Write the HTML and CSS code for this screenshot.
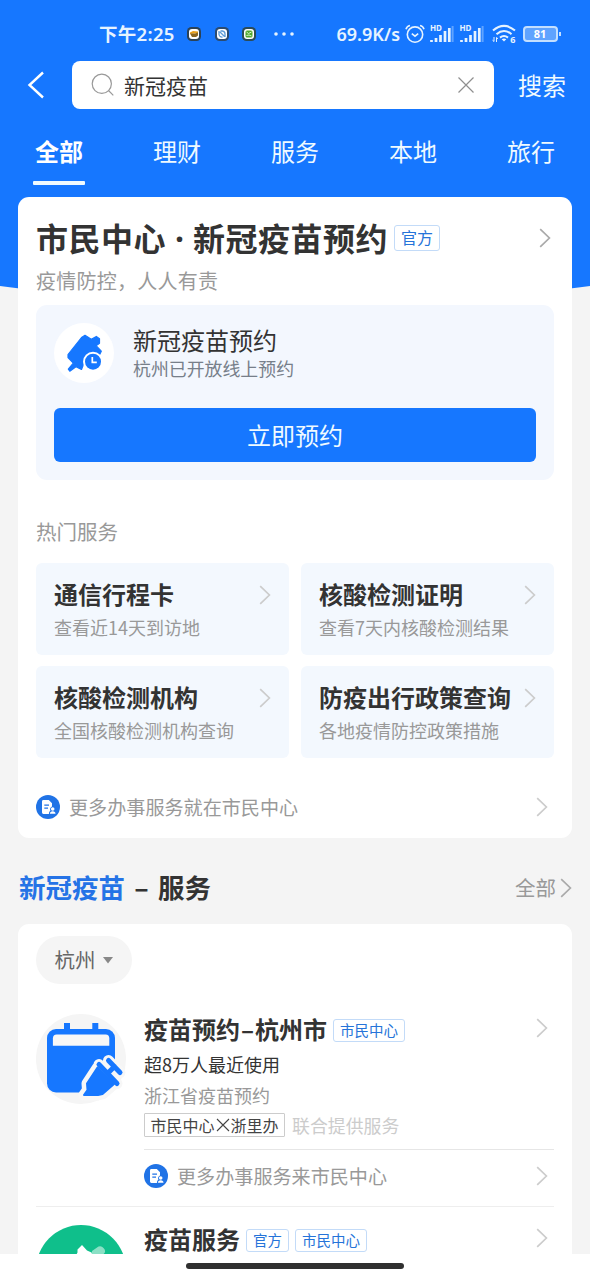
FILE: index.html
```html
<!DOCTYPE html>
<html lang="zh-CN">
<head>
<meta charset="utf-8">
<title>新冠疫苗</title>
<link rel="stylesheet" href="styles.css">
</head>
<body>
<svg class="defs" width="0" height="0" aria-hidden="true">
  <symbol id="chev" viewBox="0 0 12 20"><path d="M1.2 1.2 10.4 10 1.2 18.8" fill="none" stroke="currentColor" stroke-width="1.7"/></symbol>
  <symbol id="doc" viewBox="0 0 24 24">
    <circle cx="12" cy="12" r="12" fill="#2073e6"/>
    <path d="M7.400 5h5.400l3.200 3.200v3.400a3 3 0 0 0-1.600 4.200c-1 .7-1.500 1.600-1.500 3.200H7.400A1.400 1.400 0 0 1 6 17.600V6.400A1.400 1.400 0 0 1 7.400 5z" fill="#fff"/>
    <path d="M8.300 10.200h4.700M8.300 13.200h3.700" stroke="#2073e6" stroke-width="1.200"/>
    <circle cx="16.700" cy="14" r="1.800" fill="#fff"/>
    <path d="M13.900 18.700c0-1.500 1-2.400 2.800-2.400s2.800.9 2.800 2.400z" fill="#fff"/>
  </symbol>
  <symbol id="signal" viewBox="0 0 24 18">
    <path d="M1.500 17v-2M6 17v-4M10.500 17V10M15 17V6M19.300 17V3" stroke="#e6f3ff" stroke-width="2.700"/>
    <path d="M22.600 17V1" stroke="#5fa3ff" stroke-width="2"/>
  </symbol>
  <symbol id="syringe" viewBox="0 0 90 90">
    <path d="M72.500 46.500 84 58.500M78.500 52.500 72 59M63 50.500 81 69.500" stroke-width="5" stroke-linecap="round"/>
    <path d="M61.500 53.500 78 70 66.500 80 62 81H48l3.500-5-.5-6.500z" stroke-width="2" stroke-linejoin="round"/>
  </symbol>
</svg>
<div class="screen">
  <div class="viewport">
    <header class="header">
      <div class="status">
        <span class="clock">下午2:25</span>
        <svg class="app" viewBox="0 0 14 14"><rect width="14" height="14" rx="4.500" fill="#2b4257"/><rect x="2" y="2" width="10" height="10" rx="3" fill="#fff"/><path d="M3 5.500 6 4l5 .5v1.500L3 7z" fill="#e9a11d"/><path d="M3 6.500h5l3-1v3L9 10H5z" fill="#8a651f"/></svg>
        <svg class="app" viewBox="0 0 14 14"><rect width="14" height="14" rx="4.500" fill="#2b4b70"/><rect x="2" y="2" width="10" height="10" rx="3" fill="#fff"/><path d="M4 4v3.500A3 3 0 0 0 7.500 10M5.500 4h2A3 3 0 0 1 10 7v3M5 5l4.500 4.500" fill="none" stroke="#5c9bd8" stroke-width="1.300"/></svg>
        <svg class="app" viewBox="0 0 14 14"><rect width="14" height="14" rx="4.500" fill="#2b4b57"/><rect x="2" y="2" width="10" height="10" rx="3" fill="#fff"/><rect x="3.500" y="3.500" width="7" height="7" rx="1.500" fill="#50a830"/><path d="m4.500 5 2 1.500L9.500 5M4.500 8.500 7 8l2.500 1" fill="none" stroke="#d6f3c8"/></svg>
        <svg class="dots" viewBox="0 0 20 4"><g fill="#e6f3ff"><circle cx="2" cy="2" r="1.800"/><circle cx="10" cy="2" r="1.800"/><circle cx="18" cy="2" r="1.800"/></g></svg>
        <span class="speed">69.9K/s</span>
        <svg class="alarm" viewBox="0 0 20 20"><g fill="none" stroke="#e6f3ff" stroke-width="1.600"><circle cx="10" cy="10.600" r="7.700"/><path d="M6.800 9.600 10 12.200l3.200-2.600M1 5.200Q1.800 2.200 5 1.500M19 5.200Q18.200 2.200 15 1.500"/></g></svg>
        <span class="cell"><b>HD</b><svg viewBox="0 0 24 18"><use href="#signal"/></svg></span>
        <span class="cell"><b>HD</b><svg viewBox="0 0 24 18"><use href="#signal"/></svg></span>
        <span class="wifi"><svg viewBox="0 0 24 20"><g fill="none" stroke="#e6f3ff" stroke-width="2.100"><path d="M1 6.500Q12-2.700 23 6.500M4.500 10.200q7.500-6.400 15 0M8 13.600q4-3.200 8 0"/></g><path d="m9.700 15.200 2.300 2.300 2.300-2.300q-2.300-1.500-4.600 0z" fill="#e6f3ff"/><path d="M2 13v4.500l-1.500-1.300M4.500 18v-4.500L6 14.800" fill="none" stroke="#e6f3ff"/></svg><b>6</b></span>
        <span class="battery"><b>81</b></span>
      </div>
      <div class="searchrow">
        <svg class="back" viewBox="0 0 18 28"><path d="M16 1.500 2.500 14 16 26.500" fill="none" stroke="#fff" stroke-width="2.400"/></svg>
        <div class="searchbox">
          <svg class="mag" viewBox="0 0 24 24"><g fill="none" stroke="#999" stroke-width="1.200"><circle cx="10.800" cy="10.800" r="9.600"/><path d="m17.500 17.500 4.800 4.800"/></g></svg>
          <span class="query">新冠疫苗</span>
          <svg class="clear" viewBox="0 0 16 16"><path d="m.5.5 15 15m0-15-15 15" stroke="#8f8f8f" stroke-width="1.200"/></svg>
        </div>
        <span class="go">搜索</span>
      </div>
      <nav class="tabs">
        <span class="tab active">全部</span><span class="tab">理财</span><span class="tab">服务</span><span class="tab">本地</span><span class="tab">旅行</span>
      </nav>
    </header>

    <section class="card center-card">
      <div class="head"><h1>市民中心<i>·</i>新冠疫苗预约</h1><span class="badge big">官方</span><svg class="chev dark"><use href="#chev"/></svg></div>
      <p class="slogan">疫情防控，人人有责</p>
      <div class="panel">
        <div class="panel-top">
          <svg class="round" viewBox="0 0 60 60"><circle cx="30" cy="30" r="30" fill="#fff"/>
            <path d="M27.500 14.500 31 12.300l6.300 3.900 5-2.800 3.200 2.400v4.500l-3.400 2.400 5.200 5.500-2 4L31 37.500l-3.500 9-5.500-2.700-6.200 4.400-1.500-2 5-6L14 34.500v-3z" fill="#1677ff" stroke="#1677ff" stroke-width="1.200" stroke-linejoin="round"/>
            <circle cx="39" cy="38.700" r="10" fill="#fff"/><circle cx="39" cy="38.700" r="8" fill="#1677ff"/><path d="M38.300 34v5.300h4.500" fill="none" stroke="#fff" stroke-width="1.700"/></svg>
          <div><div class="p-title">新冠疫苗预约</div><div class="p-sub">杭州已开放线上预约</div></div>
        </div>
        <div class="cta">立即预约</div>
      </div>
      <h2 class="hot">热门服务</h2>
      <div class="grid">
        <div class="tile"><div class="t-row"><b>通信行程卡</b><svg class="chev"><use href="#chev"/></svg></div><p>查看近14天到访地</p></div>
        <div class="tile"><div class="t-row"><b>核酸检测证明</b><svg class="chev"><use href="#chev"/></svg></div><p>查看7天内核酸检测结果</p></div>
        <div class="tile"><div class="t-row"><b>核酸检测机构</b><svg class="chev"><use href="#chev"/></svg></div><p>全国核酸检测机构查询</p></div>
        <div class="tile"><div class="t-row"><b>防疫出行政策查询</b><svg class="chev"><use href="#chev"/></svg></div><p>各地疫情防控政策措施</p></div>
      </div>
      <div class="more"><svg class="doc"><use href="#doc"/></svg><span>更多办事服务就在市民中心</span><svg class="chev"><use href="#chev"/></svg></div>
    </section>

    <div class="section"><h2><em>新冠疫苗</em><i>–</i>服务</h2><span class="all">全部</span><svg class="chev dark"><use href="#chev"/></svg></div>

    <section class="card list-card">
      <div class="pill"><span>杭州</span><svg viewBox="0 0 10 7"><path d="M0 0h10L5 6.500z" fill="#888"/></svg></div>
      <article class="item">
        <svg class="logo" viewBox="0 0 90 90"><circle cx="45" cy="45" r="45" fill="#f5f5f5"/>
          <path d="M28 9h6v8h-6zM56.300 9h6v8h-6z" fill="#1677ff"/><rect x="11" y="15" width="68" height="63.500" rx="9" fill="#1677ff"/>
          <path d="M20.700 20.500h49q3.600 0 3.600 4v7.300H16.900v-7.300q0-4 3.800-4z" fill="#f7f7f7"/>
          <path d="M72.500 46.500 84 58.500M78.500 52.500 72 59M63 50.500 81 69.500M61.500 53.500 78 70 66.500 80 62 81H48l3.500-5-.5-6.500z" fill="#f7f7f7" stroke="#f7f7f7" stroke-width="11" stroke-linejoin="round" stroke-linecap="round"/>
          <use href="#syringe" width="90" height="90" fill="#1677ff" stroke="#1677ff"/>
        </svg>
        <div class="body">
          <div class="i-head"><h3>疫苗预约<i>–</i>杭州市</h3><span class="badge">市民中心</span><svg class="chev"><use href="#chev"/></svg></div>
          <p class="usage">超8万人最近使用</p>
          <p class="desc">浙江省疫苗预约</p>
          <div class="provider"><span class="box">市民中心<svg viewBox="0 0 16 16"><path d="m2 2 12 12M14 2 2 14" stroke="#444" stroke-width="1.100"/></svg>浙里办</span><span class="joint">联合提供服务</span></div>
          <div class="more sub"><svg class="doc"><use href="#doc"/></svg><span>更多办事服务来市民中心</span><svg class="chev"><use href="#chev"/></svg></div>
        </div>
      </article>
      <article class="item second">
        <svg class="logo" viewBox="0 0 90 90"><circle cx="45" cy="45" r="45" fill="#0fbf8b"/><path d="M56 26l6.500-4.500q3-1 5 1.500 2.500 2.500 1 5l-5 6h-8z" fill="#8be0c5"/><path d="M36 38 41.500 27.500v-3l4.500-4.500 5 5.500 4.500 2 4 12z" fill="#fff"/></svg>
        <div class="body"><div class="i-head"><h3>疫苗服务</h3><span class="badge">官方</span><span class="badge">市民中心</span><svg class="chev"><use href="#chev"/></svg></div></div>
      </article>
    </section>
  </div>
  <div class="homebar"><span></span></div>
</div>
</body>
</html>
```
FILE: styles.css
```css
* { box-sizing: border-box; margin: 0; padding: 0; }
body { font-family: "Noto Sans CJK SC", sans-serif; color: #333; background: #f4f4f4; }
i, em { font-style: normal; }
svg { display: block; flex: none; }
.defs { position: absolute; }
.screen { width: 590px; height: 1278px; overflow: hidden; background: #fff; }
.viewport { position: relative; height: 1254px; overflow: hidden; background: #f4f4f4; }
.viewport::before { content: ""; position: absolute; left: -100px; right: -100px; top: 0; height: 302px; background: #1677ff; border-radius: 0 0 50% 50% / 0 0 48px 48px; }
.header, .card, .section { position: relative; }
.header { height: 197px; color: #effaff; }

.status { display: flex; align-items: center; height: 61px; padding: 7px 0 0 99px; color: #e6f3ff; }
.clock { width: 88px; font: 600 18.500px/28px "Noto Sans", "Noto Sans CJK SC", sans-serif; letter-spacing: .3px; white-space: nowrap; }
.app { width: 14px; height: 14px; margin-right: 13.500px; }
.dots { width: 20px; height: 4px; margin-left: 4px; }
.speed { width: 68px; margin-left: 43px; font: 600 18px/28px "Noto Sans", sans-serif; white-space: nowrap; }
.alarm { width: 20px; height: 20px; }
.cell { position: relative; margin-left: 5.500px; width: 24px; height: 18px; }
.cell svg { width: 24px; height: 18px; }
.cell b { position: absolute; left: 0; top: -1px; font: 700 8px/8px "Noto Sans", sans-serif; }
.wifi { position: relative; width: 24px; height: 20px; margin-left: 8px; }
.wifi svg { width: 24px; height: 20px; }
.wifi b { position: absolute; right: 0; bottom: 0; font: 700 9px/9px "Noto Sans", sans-serif; }
.battery { position: relative; display: flex; align-items: center; justify-content: center; width: 35px; height: 16px; margin-left: 7px; border: 2px solid #c3dfff; border-radius: 4px; background: #5fa3ff; }
.battery::after { content: ""; position: absolute; right: -5px; top: 4px; width: 2px; height: 4px; background: #c3dfff; }
.battery b { font: 700 11px/12px "Noto Sans", sans-serif; color: #fff; }

.searchrow { display: flex; align-items: center; height: 48px; padding-left: 27px; }
.back { width: 18px; height: 28px; }
.searchbox { display: flex; align-items: center; width: 422px; height: 48px; margin-left: 27px; padding: 0 20px 0 19px; border-radius: 8px; background: #fff; }
.mag { width: 24px; height: 24px; }
.query { flex: 1; margin-left: 9px; font-size: 21px; line-height: 30px; color: #333; }
.clear { width: 16px; height: 16px; }
.go { margin-left: 24px; padding-bottom: 1px; font-size: 24px; line-height: 34px; }
.tabs { display: grid; grid-template-columns: repeat(5, 118px); }
.tab { display: flex; flex-direction: column; align-items: center; padding-top: 25px; font-size: 24px; line-height: 34px; }
.active { font-weight: 700; color: #fff; }
.active::after { content: ""; width: 52px; height: 4px; margin-top: 12.500px; border-radius: 1px; background: #f0fbff; }

.card { width: 554px; margin: 0 auto; padding: 0 18px; border-radius: 11px; background: #fff; }
.center-card { height: 641px; padding-top: 19px; }
.chev { width: 12px; height: 20px; margin-left: auto; color: #ccc; }
.chev.dark { color: #aaa; }
.head { display: flex; align-items: center; height: 44px; padding-right: 3px; }
h1 { padding-bottom: 1px; font-size: 32px; line-height: 43px; font-weight: 700; letter-spacing: .5px; white-space: nowrap; }
h1 i { display: inline-block; width: 27px; text-align: center; letter-spacing: 0; font-family: "Noto Sans", sans-serif; }
.badge { display: flex; align-items: center; height: 23px; padding: 0 6px 2px; border: 1px solid #c3dbf8; border-radius: 3px; font-size: 14.500px; line-height: 19px; color: #2573d9; }
.badge.big { height: 26px; margin-left: 6px; font-size: 16px; }
.slogan { margin-top: 7px; font-size: 20px; line-height: 28px; letter-spacing: .25px; color: #999; }
.panel { height: 175px; margin-top: 10px; padding: 18px; border-radius: 11px; background: #f3f7fe; }
.panel-top { display: flex; gap: 19px; height: 85px; }
.round { width: 60px; height: 60px; }
.p-title { font-size: 24px; line-height: 34px; }
.p-sub { font-size: 17.900px; line-height: 22px; color: #777f8a; }
.cta { height: 54px; border-radius: 6px; background: #1677ff; color: #effaff; font-size: 24px; line-height: 54px; text-align: center; }
.hot { margin-top: 37px; font-size: 20.500px; line-height: 28px; font-weight: 400; color: #999; }
.grid { display: grid; grid-template-columns: 1fr 1fr; gap: 11.500px 12px; margin-top: 18px; }
.tile { height: 91.500px; padding: 16px 18px 0; border-radius: 6px; background: #f3f8fe; }
.t-row { display: flex; align-items: center; height: 32px; font-size: 24px; white-space: nowrap; }
.t-row b { padding-bottom: 2px; line-height: 30px; }
.tile p { margin-top: 4px; font-size: 18px; line-height: 24px; color: #999; white-space: nowrap; }
.more { display: flex; align-items: center; height: 24px; margin-top: 37px; padding-right: 6px; font-size: 19.100px; color: #999; }
.more span { margin-left: 9px; }
.doc { width: 24px; height: 24px; }

.section { display: flex; align-items: center; height: 86px; padding: 14px 18px 0 19px; }
.section h2 { padding-bottom: 2px; font-size: 26.500px; line-height: 36px; }
.section em { color: #2573e6; }
.section i { display: inline-block; width: 33px; text-align: center; }
.all { margin-left: auto; padding-bottom: 2px; font-size: 20.500px; line-height: 28px; color: #999; }
.section .chev { margin-left: 4px; }

.list-card { padding-top: 12px; height: 400px; }
.pill { display: flex; align-items: center; gap: 7px; width: 96px; height: 48px; padding-left: 18.500px; border-radius: 24px; background: #f5f5f5; font-size: 20.500px; color: #666; }
.pill span { padding-bottom: 2px; line-height: 28px; }
.pill svg { width: 10px; height: 7px; }
.item { display: flex; gap: 18px; height: 192.500px; margin-top: 30px; border-bottom: 1px solid #eee; }
.logo { width: 90px; height: 90px; }
.body { flex: 1; }
.i-head { display: flex; align-items: center; height: 32px; padding-right: 6px; }
.i-head .chev { margin-bottom: 5px; }
h3 { font-size: 24px; line-height: 24px; padding-bottom: 2px; white-space: nowrap; }
h3 i { display: inline-block; width: 15px; text-align: center; }
.i-head .badge { margin-left: 6px; }
.usage { margin-top: 6px; font-size: 18px; line-height: 24px; }
.desc { margin-top: 7px; font-size: 18px; line-height: 24px; color: #999; }
.provider { display: flex; align-items: center; gap: 7px; height: 24px; margin-top: 6px; }
.box { display: flex; align-items: center; height: 24px; padding: 0 5.500px; border: 1px solid #ccc; border-radius: 1px; font-size: 16px; color: #444; }
.box svg { width: 16px; height: 16px; }
.joint { font-size: 17.900px; color: #ccc; }
.more.sub { height: 52px; margin-top: 12px; border-top: 1px solid #e6e6e6; }
.second { height: 90px; margin-top: 18.500px; border: 0; }
.second .i-head { height: 30px; }
.homebar { height: 24px; padding-top: 9px; background: #fff; }
.homebar span { display: block; width: 218px; height: 6px; margin: 0 auto; border-radius: 3px; background: #303030; }
```
